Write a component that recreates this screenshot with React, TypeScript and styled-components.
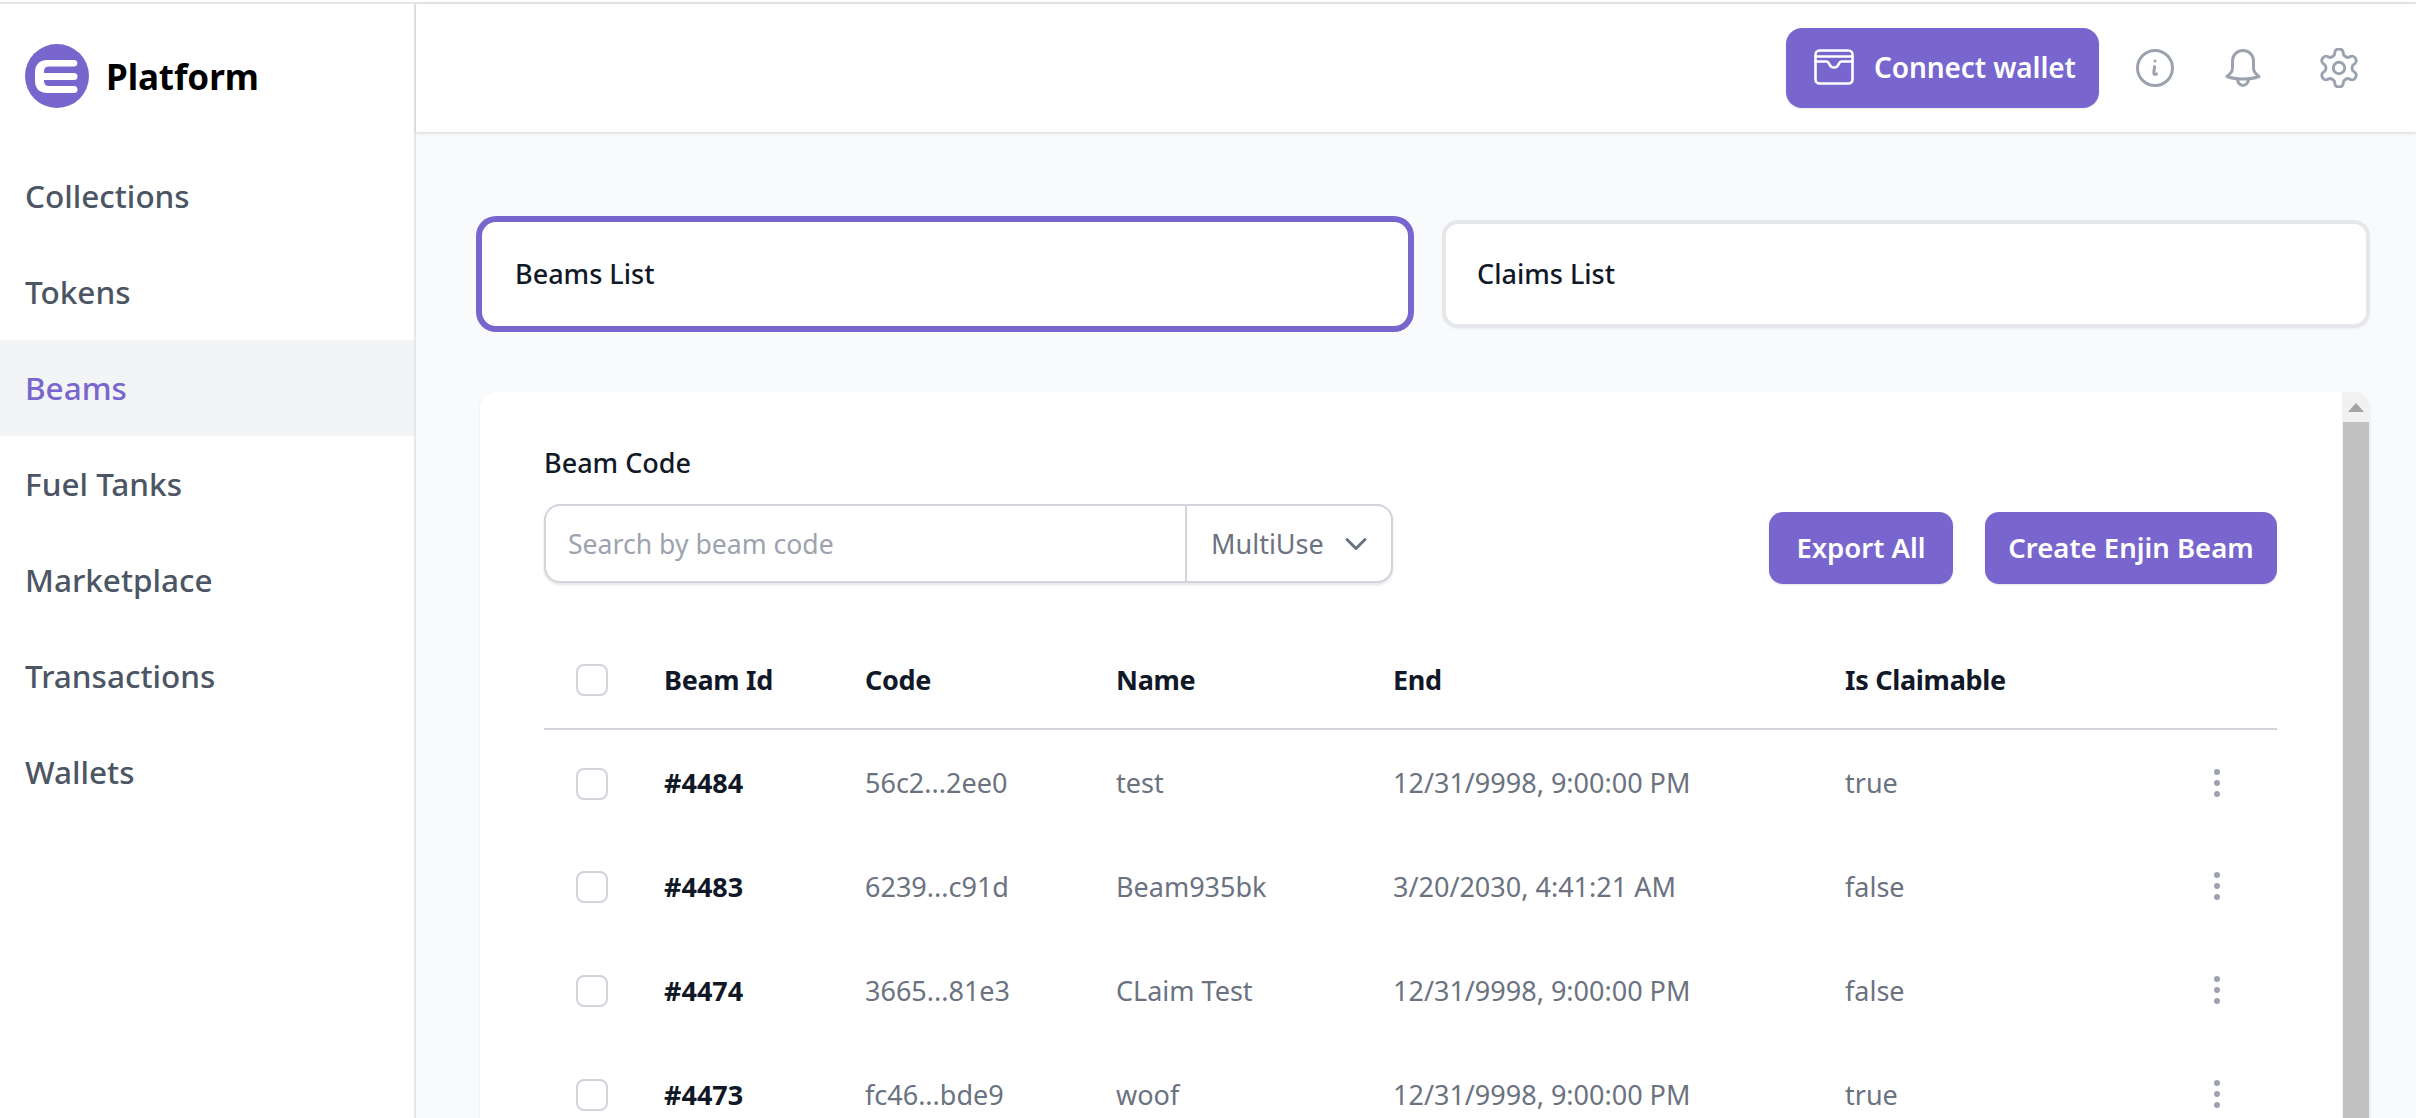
import React from "react";
import styled, { createGlobalStyle } from "styled-components";
import { ChevronDown } from "lucide-react";

const FONT = `"Noto Sans", "Open Sans", sans-serif`;

const Global = createGlobalStyle`
  html, body { margin: 0; padding: 0; background: #fff; overflow: hidden; }
  * { box-sizing: border-box; }
  body { font-family: ${FONT}; }
`;

const Page = styled.div`
  width: 2416px;
  height: 1118px;
  display: flex;
  flex-direction: column;
  overflow: hidden;
  padding-top: 2px;
  background: #fff;
`;
const TopLine = styled.div`
  height: 2px;
  flex: none;
  background: #e5e5e5;
`;
const Body = styled.div`
  flex: 1;
  min-height: 0;
  display: flex;
`;
const Sidebar = styled.aside`
  width: 416px;
  flex: none;
  border-right: 2px solid #e5e7eb;
  background: #fff;
`;
const Brand = styled.div`
  height: 144px;
  display: flex;
  align-items: center;
  gap: 17px;
  padding-left: 25px;
`;
const BrandName = styled.span`
  font-size: 35px;
  font-weight: 700;
  color: #000;
  letter-spacing: -0.1px;
`;
const NavItem = styled.div<{ $active?: boolean }>`
  height: 96px;
  display: flex;
  align-items: center;
  padding: 0 0 2px 25px;
  font-size: 31.5px;
  font-weight: 500;
  color: ${(p) => (p.$active ? "#7866ce" : "#4b5563")};
  background: ${(p) => (p.$active ? "#f3f4f6" : "transparent")};
`;
const Main = styled.main`
  flex: 1;
  min-width: 0;
  display: flex;
  flex-direction: column;
  background: #f9fafb;
`;
const Header = styled.header`
  height: 128px;
  flex: none;
  display: flex;
  align-items: center;
  justify-content: flex-end;
  padding-right: 57px;
  background: #fff;
  box-shadow: 0 1px 3px rgba(0, 0, 0, 0.16);
`;
const WalletButton = styled.button`
  width: 313px;
  height: 80px;
  margin-right: 37px;
  display: flex;
  align-items: center;
  gap: 20px;
  padding: 0 0 2px 28px;
  border: 0;
  border-radius: 16px;
  background: #7866ce;
  color: #fff;
  font-family: ${FONT};
  font-size: 28px;
  font-weight: 600;
  letter-spacing: -0.1px;
  box-shadow: 0 1px 2px rgba(0, 0, 0, 0.08);
`;
const HeaderIcon = styled.span<{ $gap?: number }>`
  display: flex;
  margin-left: ${(p) => p.$gap ?? 0}px;
  color: #9ca3af;
`;
const Content = styled.div`
  flex: 1;
  min-height: 0;
  padding: 88px 46px 0 64px;
`;
const Tabs = styled.div`
  display: grid;
  grid-template-columns: 930px 1fr;
  gap: 32px;
`;
const Tab = styled.div<{ $active?: boolean }>`
  height: 108px;
  display: flex;
  align-items: center;
  border-radius: 16px;
  background: #fff;
  font-size: 27px;
  font-weight: 500;
  color: #111827;
  border: ${(p) => (p.$active ? "2px solid #7866ce" : "4px solid #e5e7eb")};
  padding-left: ${(p) => (p.$active ? 33 : 31)}px;
  padding-bottom: 2px;
  box-shadow: ${(p) => (p.$active ? "0 0 0 4px #7866ce" : "0 1px 2px rgba(0,0,0,0.05)")};
`;
const Card = styled.section`
  position: relative;
  margin-top: 64px;
  height: 900px;
  padding: 46px 93px 0 64px;
  border-radius: 16px;
  background: #fff;
  box-shadow: 0 1px 3px rgba(0, 0, 0, 0.08);
  overflow: hidden;
`;
const ScrollTrack = styled.div`
  position: absolute;
  top: 0;
  right: 0;
  bottom: 0;
  width: 28px;
  display: flex;
  flex-direction: column;
  background: #f1f1f1;
`;
const ScrollUp = styled.div`
  height: 30px;
  flex: none;
  display: flex;
  align-items: center;
  justify-content: center;
  &::before {
    content: "";
    border-left: 8px solid transparent;
    border-right: 8px solid transparent;
    border-bottom: 9px solid #a3a3a3;
  }
`;
const ScrollThumb = styled.div`
  flex: 1;
  margin: 0 1px;
  background: #c1c1c1;
`;
const Toolbar = styled.div`
  display: flex;
  align-items: flex-end;
  justify-content: space-between;
`;
const FilterBox = styled.div`
  width: 849px;
  padding-bottom: 1px;
  border-radius: 16px;
  box-shadow: 0 0 2px rgba(0, 0, 0, 0.04);
`;
const FilterLabel = styled.label`
  display: block;
  height: 66px;
  line-height: 50px;
  font-size: 27px;
  font-weight: 500;
  color: #111827;
`;
const InputGroup = styled.div`
  height: 79px;
  display: flex;
  border: 2px solid #d1d5db;
  border-radius: 16px;
  background: #fff;
  box-shadow: 0 2px 3px rgba(0, 0, 0, 0.1);
`;
const SearchInput = styled.input`
  width: 639px;
  border: 0;
  outline: 0;
  background: transparent;
  padding: 0 0 0 22px;
  font-family: ${FONT};
  font-size: 26.6px;
  color: #111827;
  &::placeholder { color: #9ca3af; opacity: 1; }
`;
const SelectBox = styled.div`
  flex: 1;
  display: flex;
  align-items: center;
  justify-content: space-between;
  padding: 0 17px 0 24px;
  border-left: 2px solid #d1d5db;
  font-size: 27px;
  color: #6b7280;
`;
const Actions = styled.div`
  display: flex;
  gap: 32px;
`;
const PrimaryButton = styled.button<{ $width: number }>`
  width: ${(p) => p.$width}px;
  height: 72px;
  padding: 0 0 2px;
  border: 0;
  border-radius: 14px;
  background: #7866ce;
  color: #fff;
  font-family: ${FONT};
  font-size: 27.5px;
  font-weight: 600;
  box-shadow: 0 1px 2px rgba(0, 0, 0, 0.1);
`;
const Table = styled.table`
  width: 1733px;
  margin-top: 47px;
  table-layout: fixed;
  border-collapse: collapse;
`;
const HeadRow = styled.tr`
  height: 98px;
  border-bottom: 2px solid #d1d5db;
`;
const Row = styled.tr`
  height: 104px;
`;
const Th = styled.th<{ $w?: number }>`
  width: ${(p) => (p.$w ? `${p.$w}px` : "auto")};
  padding: 0;
  text-align: left;
  font-size: 27px;
  font-weight: 700;
  letter-spacing: -0.3px;
  color: #111827;
`;
const Td = styled.td<{ $strong?: boolean }>`
  padding: 2px 0 0;
  font-size: 27px;
  font-weight: ${(p) => (p.$strong ? 700 : 400)};
  color: ${(p) => (p.$strong ? "#111827" : "#6b7280")};
`;
const Check = styled.span<{ $row?: boolean }>`
  display: block;
  width: 32px;
  height: 32px;
  margin: ${(p) => (p.$row ? "2px 0 0 32px" : "0 0 0 32px")};
  border: 2px solid #d1d5db;
  border-radius: 8px;
  background: #fff;
`;
const Dots = styled.span`
  display: flex;
  flex-direction: column;
  gap: 5px;
  margin-left: 77px;
  width: 6px;
  & > i {
    width: 6px;
    height: 6px;
    border-radius: 50%;
    background: #9ca3af;
  }
`;

const Logo = () => (
  <svg width="64" height="64" viewBox="0 0 64 64">
    <circle cx="32" cy="32" r="32" fill="#7866ce" />
    <path
      fill="#fff"
      d="M22 16H49a3.300 3.300 0 0 1 0 6.600H24q-5 0-5 5V37q0 5 5 5H49a3.500 3.500 0 0 1 0 7H22C14 49 10 44 10 37V28C10 21 14 16 22 16Z"
    />
    <path fill="#fff" d="M17 29H49a3.500 3.500 0 0 1 0 7H17Z" />
  </svg>
);

const WalletIcon = () => (
  <svg width="40" height="36" viewBox="0 0 40 36" fill="none" stroke="#fff" strokeWidth="2.6" strokeLinecap="round" strokeLinejoin="round">
    <rect x="1.5" y="1.5" width="37" height="33" rx="4" />
    <path d="M1.500 7.500h37" />
    <path d="M1.500 12.500h11c1.500 0 2 .8 2.600 2.200 1 2.400 2.600 3.800 4.900 3.800s3.900-1.400 4.900-3.800c.6-1.400 1.100-2.200 2.600-2.200h11" />
  </svg>
);

const InfoIcon = () => (
  <svg width="38" height="38" viewBox="0 0 38 38" fill="none" stroke="currentColor" strokeWidth="3" strokeLinecap="round" strokeLinejoin="round">
    <circle cx="19" cy="19" r="17.500" />
    <path d="M18.500 17.500c0 3-1 5.500-.6 7 .3 1.100 1.600 1.100 2.600.4" />
    <circle cx="19" cy="12" r="1.500" fill="currentColor" stroke="none" />
  </svg>
);

const BellIcon = () => (
  <svg width="36" height="38" viewBox="0 0 36 38" fill="none" stroke="currentColor" strokeWidth="3" strokeLinecap="round" strokeLinejoin="round">
    <path d="M18 1.500c-6.500 0-10.500 5-10.500 11v6.500c0 3.500-2 6-5.500 8.500 4 1.500 10 2.500 16 2.500s12-1 16-2.500c-3.500-2.500-5.500-5-5.500-8.500v-6.500c0-6-4-11-10.500-11z" />
    <path d="M12.500 30c0 3.500 2.500 6.500 5.500 6.500s5.500-3 5.500-6.500" />
  </svg>
);

const GearIcon = () => (
  <svg width="40" height="40" viewBox="1.500 1.500 21 21" fill="none" stroke="currentColor" strokeWidth="1.550" strokeLinecap="round" strokeLinejoin="round">
    <path d="M12.220 2h-.44a2 2 0 0 0-2 2v.18a2 2 0 0 1-1 1.730l-.43.250a2 2 0 0 1-2 0l-.15-.080a2 2 0 0 0-2.730.730l-.22.380a2 2 0 0 0 .730 2.730l.15.100a2 2 0 0 1 1 1.720v.510a2 2 0 0 1-1 1.740l-.15.090a2 2 0 0 0-.730 2.730l.22.380a2 2 0 0 0 2.730.730l.15-.080a2 2 0 0 1 2 0l.43.250a2 2 0 0 1 1 1.730V20a2 2 0 0 0 2 2h.44a2 2 0 0 0 2-2v-.18a2 2 0 0 1 1-1.730l.43-.250a2 2 0 0 1 2 0l.15.080a2 2 0 0 0 2.730-.730l.22-.390a2 2 0 0 0-.730-2.730l-.15-.080a2 2 0 0 1-1-1.740v-.500a2 2 0 0 1 1-1.740l.15-.090a2 2 0 0 0 .730-2.730l-.22-.380a2 2 0 0 0-2.730-.730l-.15.080a2 2 0 0 1-2 0l-.43-.250a2 2 0 0 1-1-1.730V4a2 2 0 0 0-2-2z" />
    <circle cx="12" cy="12" r="3" />
  </svg>
);

const NAV = ["Collections", "Tokens", "Beams", "Fuel Tanks", "Marketplace", "Transactions", "Wallets"];

const ROWS = [
  { id: "#4484", code: "56c2...2ee0", name: "test", end: "12/31/9998, 9:00:00 PM", claim: "true" },
  { id: "#4483", code: "6239...c91d", name: "Beam935bk", end: "3/20/2030, 4:41:21 AM", claim: "false" },
  { id: "#4474", code: "3665...81e3", name: "CLaim Test", end: "12/31/9998, 9:00:00 PM", claim: "false" },
  { id: "#4473", code: "fc46...bde9", name: "woof", end: "12/31/9998, 9:00:00 PM", claim: "true" },
];

export default function App() {
  return (
    <Page>
      <Global />
      <TopLine />
      <Body>
        <Sidebar>
          <Brand>
            <Logo />
            <BrandName>Platform</BrandName>
          </Brand>
          <nav>
            {NAV.map((n) => (
              <NavItem key={n} $active={n === "Beams"}>{n}</NavItem>
            ))}
          </nav>
        </Sidebar>
        <Main>
          <Header>
            <WalletButton>
              <WalletIcon />
              Connect wallet
            </WalletButton>
            <HeaderIcon><InfoIcon /></HeaderIcon>
            <HeaderIcon $gap={51}><BellIcon /></HeaderIcon>
            <HeaderIcon $gap={58}><GearIcon /></HeaderIcon>
          </Header>
          <Content>
            <Tabs>
              <Tab $active>Beams List</Tab>
              <Tab>Claims List</Tab>
            </Tabs>
            <Card>
              <ScrollTrack>
                <ScrollUp />
                <ScrollThumb />
              </ScrollTrack>
              <Toolbar>
                <FilterBox>
                  <FilterLabel>Beam Code</FilterLabel>
                  <InputGroup>
                    <SearchInput placeholder="Search by beam code" />
                    <SelectBox>
                      MultiUse
                      <ChevronDown size={36} strokeWidth={2} />
                    </SelectBox>
                  </InputGroup>
                </FilterBox>
                <Actions>
                  <PrimaryButton $width={184}>Export All</PrimaryButton>
                  <PrimaryButton $width={292}>Create Enjin Beam</PrimaryButton>
                </Actions>
              </Toolbar>
              <Table>
                <thead>
                  <HeadRow>
                    <Th $w={120}><Check /></Th>
                    <Th $w={201}>Beam Id</Th>
                    <Th $w={251}>Code</Th>
                    <Th $w={277}>Name</Th>
                    <Th $w={452}>End</Th>
                    <Th $w={292}>Is Claimable</Th>
                    <Th />
                  </HeadRow>
                </thead>
                <tbody>
                  {ROWS.map((r) => (
                    <Row key={r.id}>
                      <Td><Check $row /></Td>
                      <Td $strong>{r.id}</Td>
                      <Td>{r.code}</Td>
                      <Td>{r.name}</Td>
                      <Td>{r.end}</Td>
                      <Td>{r.claim}</Td>
                      <Td><Dots><i /><i /><i /></Dots></Td>
                    </Row>
                  ))}
                </tbody>
              </Table>
            </Card>
          </Content>
        </Main>
      </Body>
    </Page>
  );
}
